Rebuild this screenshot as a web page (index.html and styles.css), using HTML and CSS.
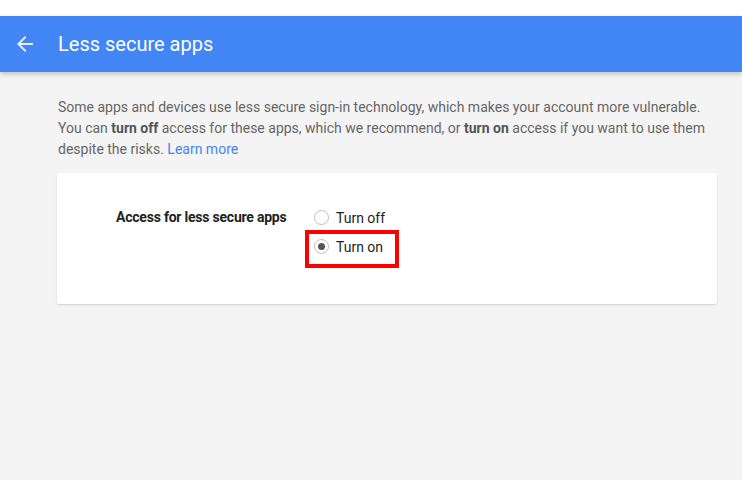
FILE: index.html
```html
<!DOCTYPE html>
<html>
<head>
<meta charset="utf-8">
<link rel="stylesheet" href="styles.css">
</head>
<body>
<div class="topstrip"></div>
<header class="appbar">
  <svg class="back" viewBox="0 0 24 24" width="24" height="24"><path d="M20 11H7.83l5.59-5.59L12 4l-8 8 8 8 1.41-1.41L7.83 13H20v-2z" fill="currentColor"/></svg>
  <h1 class="title">Less secure apps</h1>
</header>
<main class="content">
  <p class="intro">Some apps and devices use less secure sign-in technology, which makes your account more vulnerable. You can <b>turn off</b> access for these apps, which we recommend, or <b>turn on</b> access if you want to use them despite the risks. <a class="link" href="#">Learn more</a></p>
  <section class="card">
    <div class="setting">
      <div class="label">Access for less secure apps</div>
      <div class="options">
        <div class="option first"><span class="radio"></span><span class="otext">Turn off</span></div>
        <div class="option selected"><span class="radio checked"></span><span class="otext">Turn on</span><span class="highlight"></span></div>
      </div>
    </div>
  </section>
</main>
</body>
</html>
```
FILE: styles.css
```css
html, body { margin: 0; padding: 0; }
body {
  background: #f4f4f4;
  font-family: Roboto, "Noto Sans", Arial, sans-serif;
  width: 742px;
  height: 480px;
  overflow: hidden;
}
.topstrip { height: 16px; background: #fff; }
.appbar {
  height: 56px;
  background: #4285f4;
  display: flex;
  align-items: center;
  padding-left: 13px;
  box-shadow: 0 2px 5px rgba(0,0,0,0.22);
  position: relative;
  color: #fff;
}
.back { color: rgba(255,255,255,0.85); flex: none; }
.title {
  margin: 0 0 0 21px;
  font-size: 20px;
  font-weight: 400;
  color: #fff;
}
.content { padding: 0 25px 0 57px; }
.intro {
  margin: 25px 0 13px 1px;
  font-size: 14px;
  line-height: 21px;
  color: #666;
}
.intro b { color: #555; font-weight: 700; }
.link { color: #4285f4; text-decoration: none; }
.card {
  background: #fff;
  border-radius: 2px;
  box-shadow: 0 1px 2px rgba(0,0,0,0.15);
  height: 131px;
  box-sizing: border-box;
  padding: 29px 0 0 59px;
}
.setting { display: flex; align-items: flex-start; }
.label {
  width: 171px;
  margin-right: 27px;
  font-size: 14px;
  font-weight: 700;
  letter-spacing: -0.22px;
  color: #222;
  line-height: 31px;
  white-space: nowrap;
}
.options { display: flex; flex-direction: column; }
.option {
  display: flex;
  align-items: center;
  height: 31px;
  position: relative;
}
.option.first { height: 29px; align-items: flex-start; padding-top: 7px; box-sizing: border-box; }
.option.first .radio { margin-top: 1px; }
.option.first .otext { line-height: 18px; margin-top: 0; }
.radio {
  width: 13px;
  height: 13px;
  border: 1px solid #bdbdbd;
  border-radius: 50%;
  background: #fff;
  display: flex;
  align-items: center;
  justify-content: center;
  flex: none;
}
.radio.checked::after {
  content: "";
  width: 7px;
  height: 7px;
  border-radius: 50%;
  background: #555;
}
.otext {
  margin-left: 7px;
  font-size: 14px;
  color: #222;
}
.highlight {
  position: absolute;
  left: -9px;
  top: -1px;
  width: 94px;
  height: 38px;
  box-sizing: border-box;
  border: 4px solid #f00;
}
```
